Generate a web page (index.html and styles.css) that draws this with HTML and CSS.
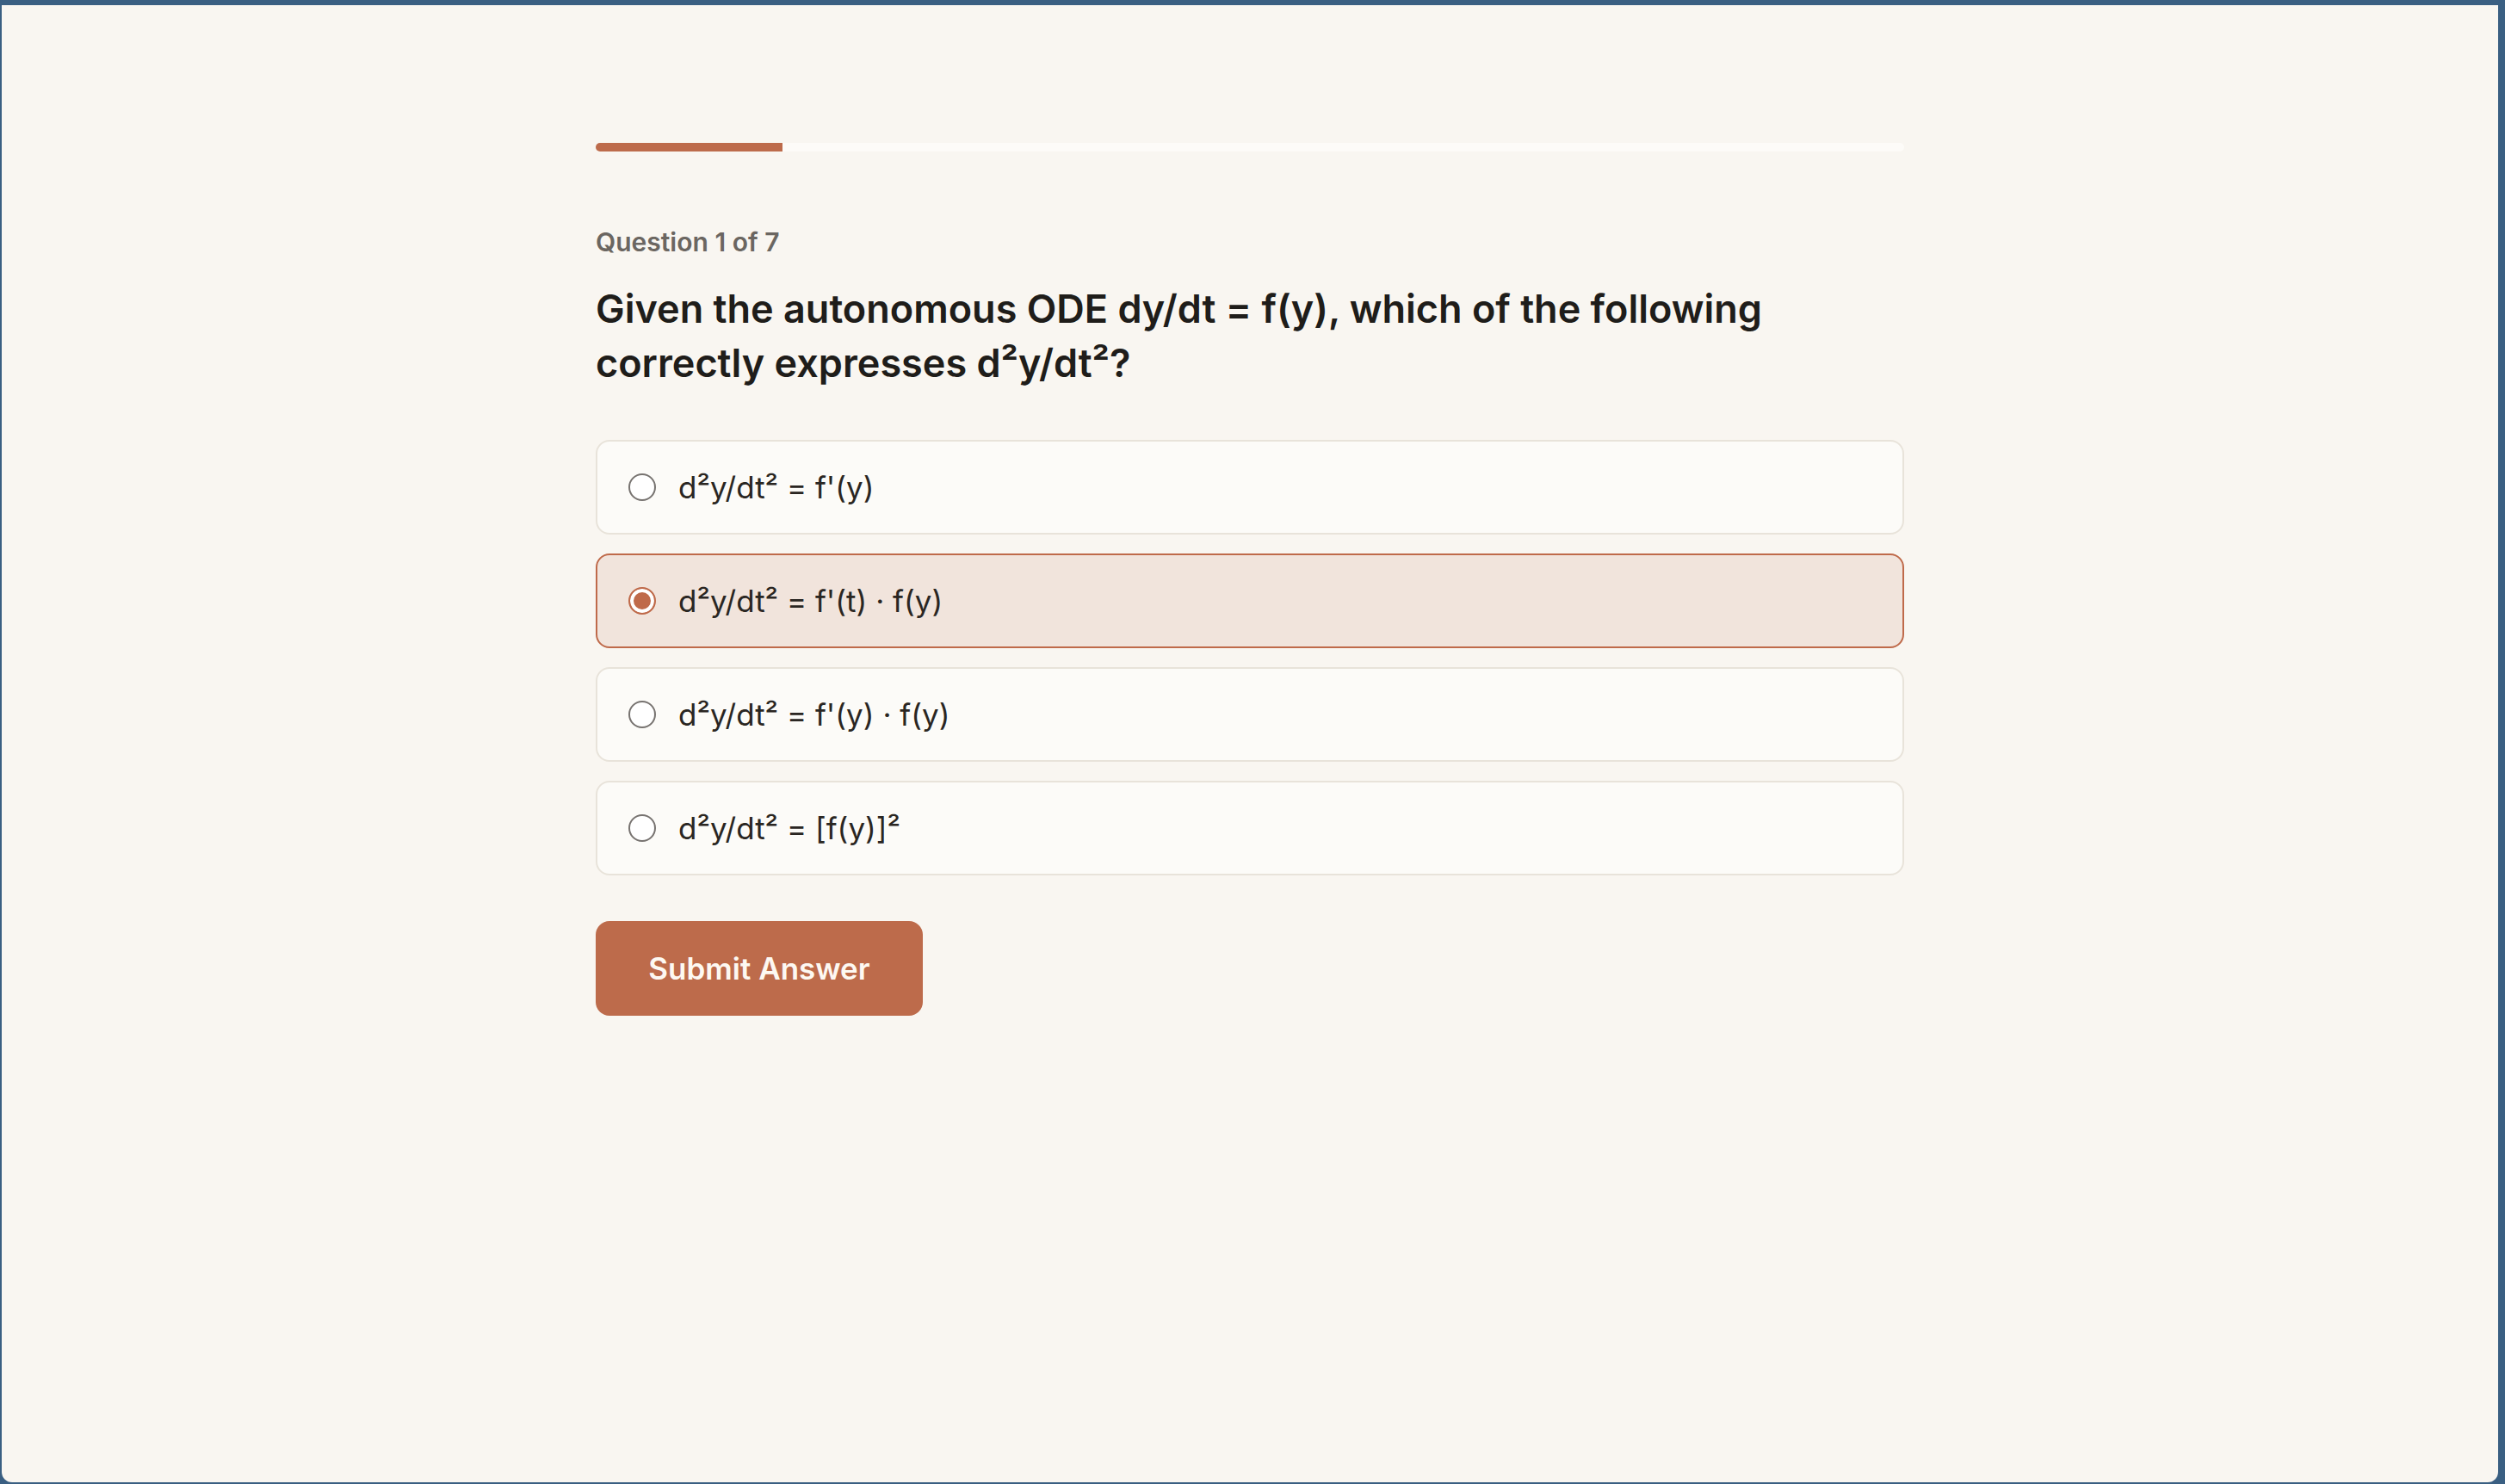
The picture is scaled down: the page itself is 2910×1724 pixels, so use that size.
FILE: index.html
```html
<!DOCTYPE html>
<html lang="en">
<head>
<meta charset="utf-8">
<title>Quiz</title>
<link rel="stylesheet" href="styles.css">
</head>
<body>
<div class="window">
  <main class="quiz">
    <div class="progress"><div class="progress-fill" style="width: 14.2857%"></div></div>
    <p class="counter">Question 1 of 7</p>
    <h1 class="question">Given the autonomous ODE dy/dt = f(y), which of the following correctly expresses d²y/dt²?</h1>
    <div class="options">
      <label class="option"><span class="radio"></span><span class="option-text">d²y/dt² = f'(y)</span></label>
      <label class="option selected"><span class="radio"></span><span class="option-text">d²y/dt² = f'(t) · f(y)</span></label>
      <label class="option"><span class="radio"></span><span class="option-text">d²y/dt² = f'(y) · f(y)</span></label>
      <label class="option"><span class="radio"></span><span class="option-text">d²y/dt² = [f(y)]²</span></label>
    </div>
    <button class="submit" type="button">Submit Answer</button>
  </main>
</div>
</body>
</html>
```

FILE: styles.css
```css
* { box-sizing: border-box; }

html, body {
  margin: 0;
  height: 100%;
}

body {
  background: #3a5f82;
  padding: 6px 8px 2px 2px;
  font-family: Inter, "Noto Sans", sans-serif;
}

.window {
  height: 100%;
  background: #f9f6f1;
  border-radius: 0 0 12px 12px;
  overflow: hidden;
}

.quiz {
  width: 1520px;
  margin: 0 auto;
  padding-top: 160px;
}

.progress {
  height: 10px;
  background: #fdfbf8;
  border-radius: 5px;
  overflow: hidden;
}

.progress-fill {
  height: 100%;
  background: #bd6b4b;
}

.counter {
  margin: 85px 0 0;
  font-size: 30px;
  line-height: 40px;
  font-weight: 600;
  color: #6b6661;
}

.question {
  margin: 26px 0 0;
  font-size: 45px;
  line-height: 63px;
  font-weight: 600;
  color: #1f1d1a;
  max-width: 1440px;
}

.options {
  margin-top: 58px;
  display: flex;
  flex-direction: column;
  gap: 22px;
}

.option {
  height: 110px;
  display: flex;
  align-items: center;
  gap: 26px;
  padding: 0 36px;
  background: #fcfbf8;
  border: 2px solid #e8e3da;
  border-radius: 16px;
  font-size: 35px;
  color: #2a2622;
}

.option.selected {
  background: #f1e4dc;
  border-color: #bf6a4a;
}

.radio {
  flex: none;
  width: 32px;
  height: 32px;
  border-radius: 50%;
  border: 2.5px solid #777370;
  background: #ffffff;
}

.option.selected .radio {
  border-color: #bf6a4a;
  background: #bf6a4a;
  box-shadow: inset 0 0 0 4px #ffffff;
}

.submit {
  margin-top: 53px;
  width: 380px;
  height: 110px;
  border: none;
  border-radius: 16px;
  background: #bd6b4b;
  color: #fdf8f2;
  font-family: Inter, "Noto Sans", sans-serif;
  font-size: 35px;
  font-weight: 600;
}
```
